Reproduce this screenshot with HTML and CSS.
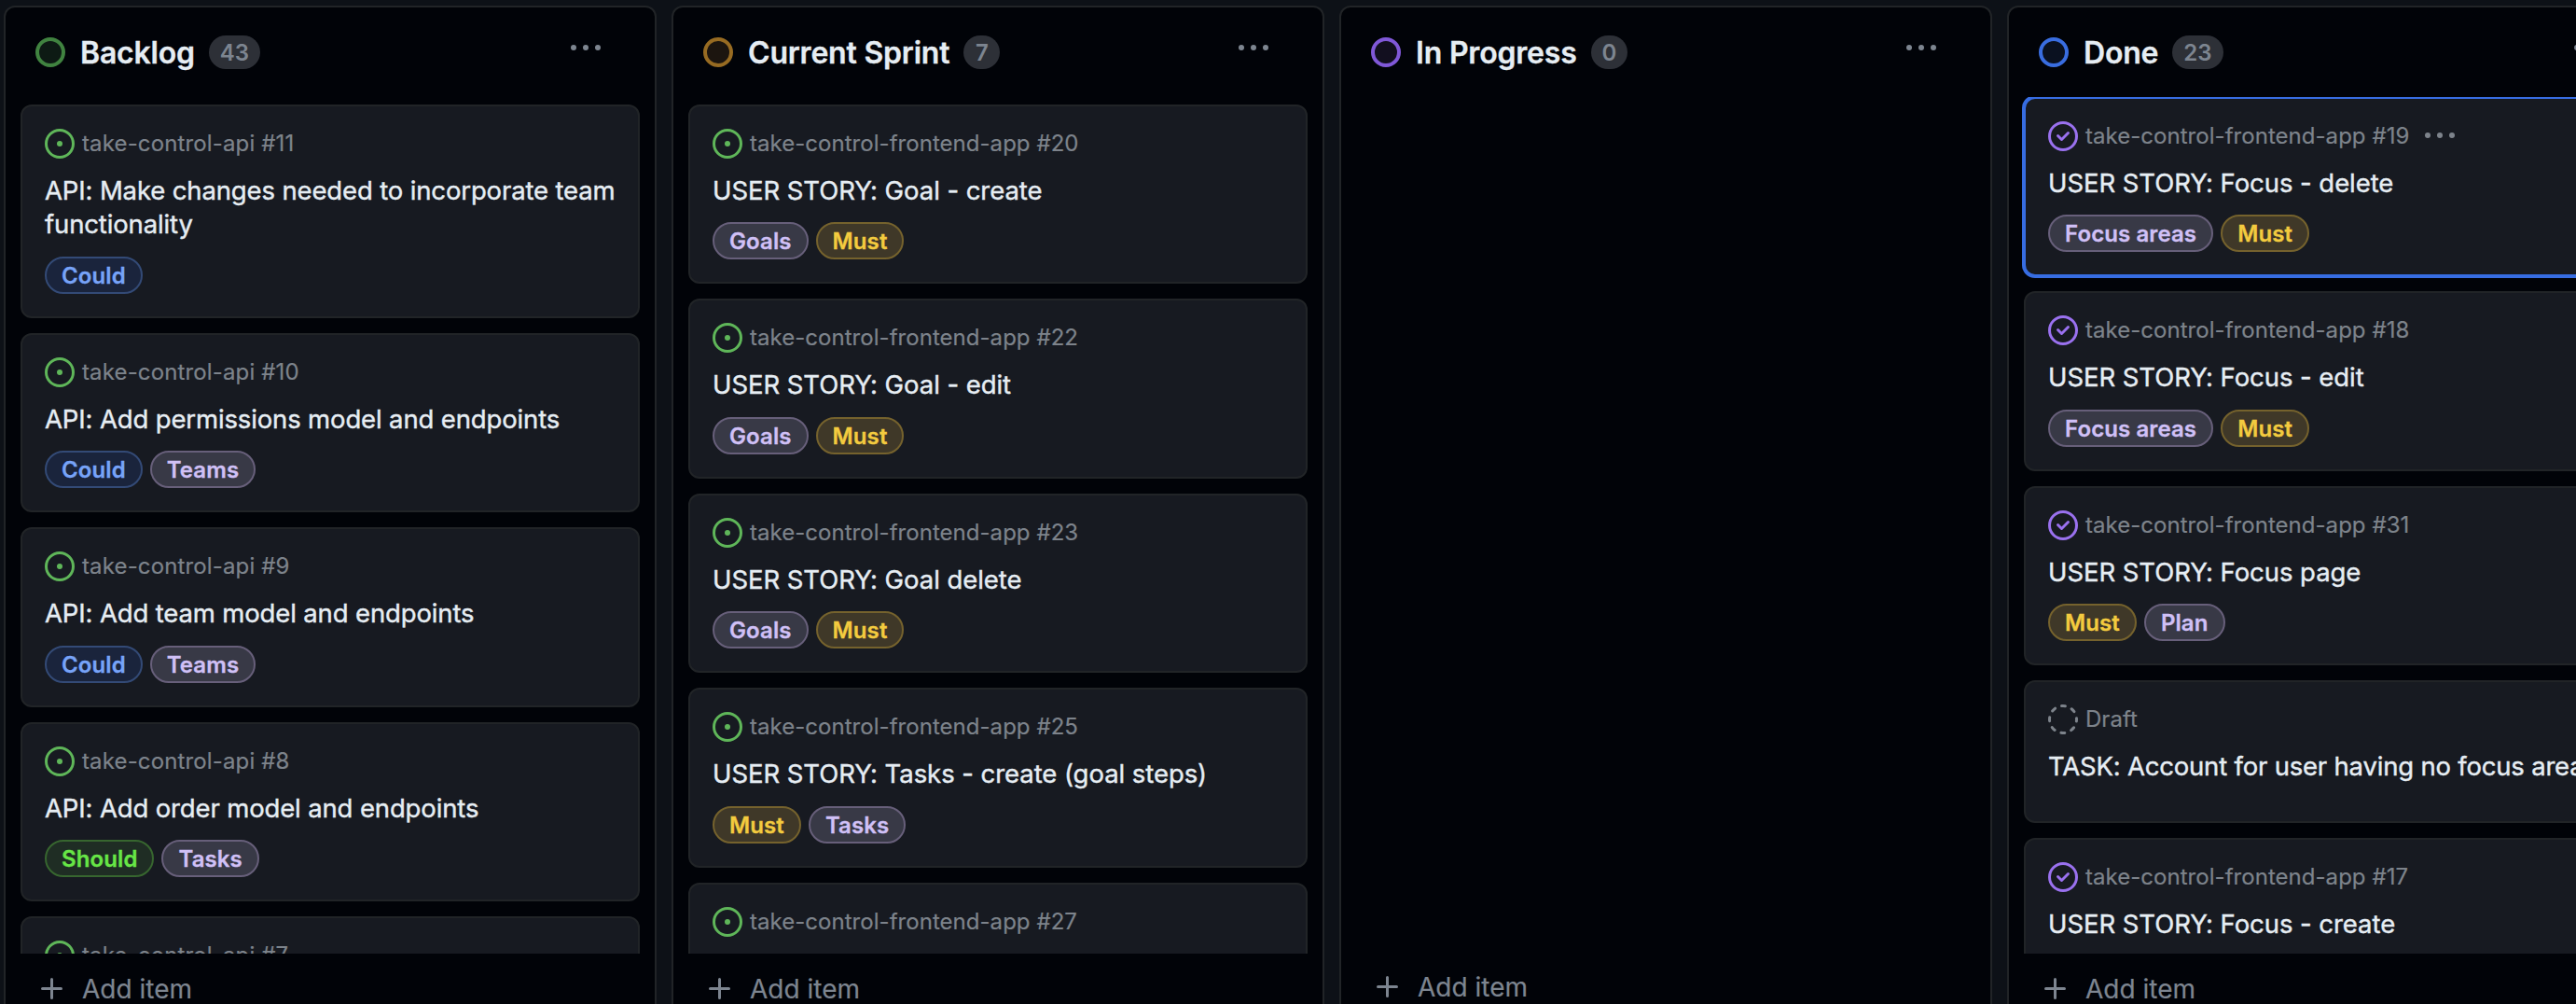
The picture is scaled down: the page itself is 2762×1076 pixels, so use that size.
FILE: index.html
```html
<!DOCTYPE html>
<html lang="en">
<head>
<meta charset="utf-8">
<title>Project board</title>
<link rel="stylesheet" href="styles.css">
</head>
<body>
<svg class="sprite" aria-hidden="true">
  <symbol id="open" viewBox="0 0 16 16"><circle cx="8" cy="8" r="7.25" fill="none" stroke="currentColor" stroke-width="1.5"/><circle cx="8" cy="8" r="1.5" fill="currentColor"/></symbol>
  <symbol id="closed" viewBox="0 0 16 16"><circle cx="8" cy="8" r="7.25" fill="none" stroke="currentColor" stroke-width="1.5"/><path fill="currentColor" d="M11.28 6.78a.75.75 0 0 0-1.06-1.06L7.25 8.69 5.78 7.22a.75.75 0 0 0-1.06 1.06l2 2a.75.75 0 0 0 1.06 0l3.5-3.5Z"/></symbol>
  <symbol id="draft" viewBox="0 0 16 16"><circle cx="8" cy="8" r="7.25" fill="none" stroke="currentColor" stroke-width="1.5" stroke-linecap="round" stroke-dasharray="2 3.694" stroke-dashoffset="1"/></symbol>
  <symbol id="dots" viewBox="0 0 16 16"><g fill="currentColor"><circle cx="1.5" cy="7.5" r="1.5"/><circle cx="8" cy="7.5" r="1.5"/><circle cx="14.5" cy="7.5" r="1.5"/></g></symbol>
  <symbol id="plus" viewBox="0 0 16 16"><path fill="none" stroke="currentColor" stroke-width="1.5" stroke-linecap="round" d="M7.75 2.75v10M2.75 7.75h10"/></symbol>
</svg>
<main class="board">
  <section class="column column-backlog">
    <header class="column-header">
      <span class="status"></span><h2 class="column-title">Backlog</h2><span class="counter">43</span>
      <svg class="icon column-menu"><use href="#dots"/></svg>
    </header>
    <div class="cards">
      <article class="card">
        <div class="meta"><svg class="icon open"><use href="#open"/></svg><span>take-control-api #11</span></div>
        <h3 class="title">API: Make changes needed to incorporate team<br>functionality</h3>
        <div class="labels"><span class="label blue">Could</span></div>
      </article>
      <article class="card">
        <div class="meta"><svg class="icon open"><use href="#open"/></svg><span>take-control-api #10</span></div>
        <h3 class="title">API: Add permissions model and endpoints</h3>
        <div class="labels"><span class="label blue">Could</span><span class="label violet">Teams</span></div>
      </article>
      <article class="card">
        <div class="meta"><svg class="icon open"><use href="#open"/></svg><span>take-control-api #9</span></div>
        <h3 class="title">API: Add team model and endpoints</h3>
        <div class="labels"><span class="label blue">Could</span><span class="label violet">Teams</span></div>
      </article>
      <article class="card">
        <div class="meta"><svg class="icon open"><use href="#open"/></svg><span>take-control-api #8</span></div>
        <h3 class="title">API: Add order model and endpoints</h3>
        <div class="labels"><span class="label green">Should</span><span class="label violet">Tasks</span></div>
      </article>
      <article class="card">
        <div class="meta"><svg class="icon open"><use href="#open"/></svg><span>take-control-api #7</span></div>
        <div class="title"></div>
        <div class="labels"></div>
      </article>
    </div>
    <footer class="add-item"><svg class="icon"><use href="#plus"/></svg><span>Add item</span></footer>
  </section>

  <section class="column column-sprint">
    <header class="column-header">
      <span class="status"></span><h2 class="column-title">Current Sprint</h2><span class="counter">7</span>
      <svg class="icon column-menu"><use href="#dots"/></svg>
    </header>
    <div class="cards">
      <article class="card">
        <div class="meta"><svg class="icon open"><use href="#open"/></svg><span>take-control-frontend-app #20</span></div>
        <h3 class="title">USER STORY: Goal - create</h3>
        <div class="labels"><span class="label violet">Goals</span><span class="label yellow">Must</span></div>
      </article>
      <article class="card">
        <div class="meta"><svg class="icon open"><use href="#open"/></svg><span>take-control-frontend-app #22</span></div>
        <h3 class="title">USER STORY: Goal - edit</h3>
        <div class="labels"><span class="label violet">Goals</span><span class="label yellow">Must</span></div>
      </article>
      <article class="card">
        <div class="meta"><svg class="icon open"><use href="#open"/></svg><span>take-control-frontend-app #23</span></div>
        <h3 class="title">USER STORY: Goal delete</h3>
        <div class="labels"><span class="label violet">Goals</span><span class="label yellow">Must</span></div>
      </article>
      <article class="card">
        <div class="meta"><svg class="icon open"><use href="#open"/></svg><span>take-control-frontend-app #25</span></div>
        <h3 class="title">USER STORY: Tasks - create (goal steps)</h3>
        <div class="labels"><span class="label yellow">Must</span><span class="label violet">Tasks</span></div>
      </article>
      <article class="card">
        <div class="meta"><svg class="icon open"><use href="#open"/></svg><span>take-control-frontend-app #27</span></div>
        <div class="title"></div>
        <div class="labels"></div>
      </article>
    </div>
    <footer class="add-item"><svg class="icon"><use href="#plus"/></svg><span>Add item</span></footer>
  </section>

  <section class="column column-progress">
    <header class="column-header">
      <span class="status"></span><h2 class="column-title">In Progress</h2><span class="counter">0</span>
      <svg class="icon column-menu"><use href="#dots"/></svg>
    </header>
    <div class="cards"></div>
    <footer class="add-item"><svg class="icon"><use href="#plus"/></svg><span>Add item</span></footer>
  </section>

  <section class="column column-done">
    <header class="column-header">
      <span class="status"></span><h2 class="column-title">Done</h2><span class="counter">23</span>
      <svg class="icon column-menu"><use href="#dots"/></svg>
    </header>
    <div class="cards">
      <article class="card selected">
        <div class="meta"><svg class="icon closed"><use href="#closed"/></svg><span>take-control-frontend-app #19</span><svg class="icon card-menu"><use href="#dots"/></svg></div>
        <h3 class="title">USER STORY: Focus - delete</h3>
        <div class="labels"><span class="label violet">Focus areas</span><span class="label yellow">Must</span></div>
      </article>
      <article class="card">
        <div class="meta"><svg class="icon closed"><use href="#closed"/></svg><span>take-control-frontend-app #18</span></div>
        <h3 class="title">USER STORY: Focus - edit</h3>
        <div class="labels"><span class="label violet">Focus areas</span><span class="label yellow">Must</span></div>
      </article>
      <article class="card">
        <div class="meta"><svg class="icon closed"><use href="#closed"/></svg><span>take-control-frontend-app #31</span></div>
        <h3 class="title">USER STORY: Focus page</h3>
        <div class="labels"><span class="label yellow">Must</span><span class="label violet">Plan</span></div>
      </article>
      <article class="card">
        <div class="meta"><svg class="icon"><use href="#draft"/></svg><span>Draft</span></div>
        <h3 class="title title-long">TASK: Account for user having no focus areas</h3>
      </article>
      <article class="card">
        <div class="meta"><svg class="icon closed"><use href="#closed"/></svg><span>take-control-frontend-app #17</span></div>
        <h3 class="title">USER STORY: Focus - create</h3>
        <div class="labels"></div>
      </article>
    </div>
    <footer class="add-item"><svg class="icon"><use href="#plus"/></svg><span>Add item</span></footer>
  </section>
</main>
</body>
</html>
```
FILE: styles.css
```css
* { box-sizing: border-box; }

body {
  margin: 0;
  height: 1076px;
  overflow: hidden;
  background: #0d1117;
  color: #e6edf3;
  font-family: Inter, "Liberation Sans", sans-serif;
}

.sprite { display: none; }

.icon {
  display: block;
  flex: none;
  width: 32px;
  height: 32px;
}

.board {
  display: flex;
  gap: 16px;
  height: 1076px;
  padding: 6px 0 0 4px;
  overflow: hidden;
}

.column {
  display: flex;
  flex: none;
  flex-direction: column;
  width: 700px;
  height: 1100px;
  background: #010308;
  border: 2px solid #212427;
  border-radius: 12px;
}

.column-header {
  display: flex;
  flex: none;
  align-items: center;
  height: 96px;
  padding: 0 58px 0 32px;
  color: #7d8590;
}

.status {
  flex: none;
  width: 32px;
  height: 32px;
  margin-right: 16px;
  border: 4px solid;
  border-radius: 50%;
}

.column-backlog .status { color: #408340; background: #0d1a14; }
.column-sprint .status { color: #976b22; background: #1c150f; }
.column-progress .status { color: #8058d8; background: #120f1f; }
.column-done .status { color: #396de0; background: #0a1120; }

.column-title {
  margin: 0;
  padding-top: 2px;
  color: #e6edf3;
  font-size: 32px;
  font-weight: 600;
  line-height: 48px;
  letter-spacing: -0.2px;
  -webkit-text-stroke: 0.3px currentColor;
}

.counter {
  min-width: 39px;
  height: 36px;
  margin-left: 15px;
  padding: 0 12px;
  border-radius: 18px;
  background: #2d3037;
  font-size: 24px;
  font-weight: 600;
  line-height: 37px;
  text-align: center;
}

.column-menu {
  align-self: flex-start;
  margin: 28px 0 0 auto;
}

.cards {
  display: flex;
  flex: none;
  flex-direction: column;
  gap: 16px;
  height: 918px;
  padding: 8px 14px 0 16px;
  overflow: hidden;
}

.column-done .cards { padding-top: 0; }

.card {
  flex: none;
  width: 664px;
  padding: 24px;
  background: #171a21;
  border: 2px solid #212427;
  border-radius: 12px;
}

.card.selected {
  border-color: #376de2;
  box-shadow: 0 0 0 2px #376de2;
}

.meta {
  display: flex;
  align-items: center;
  gap: 8px;
  height: 32px;
  color: #7d838b;
  font-size: 24px;
  line-height: 32px;
  letter-spacing: 0.04px;
  -webkit-text-stroke: 0.2px currentColor;
}

.column-backlog .meta { letter-spacing: 0.14px; }
.open { color: #5fb659; }
.closed { color: #9a71ef; }
.card-menu { margin-left: 9px; }

.title {
  min-height: 36.4px;
  margin: 16px 0;
  font-size: 27.5px;
  font-weight: 400;
  line-height: 36.4px;
  letter-spacing: -0.06px;
  white-space: nowrap;
  -webkit-text-stroke: 0.4px currentColor;
}

.column-backlog .title { letter-spacing: -0.14px; }
.title-long { letter-spacing: -0.2px; }

.labels {
  display: flex;
  gap: 8px;
  height: 40px;
}

.label {
  padding: 0 16px;
  border: 2px solid;
  border-radius: 20px;
  font-size: 24px;
  font-weight: 600;
  line-height: 37px;
  letter-spacing: 0.1px;
  -webkit-text-stroke: 0.3px currentColor;
}

.blue { color: #77a3f8; background: #1a243c; border-color: #334a76; }
.violet { color: #d0c0f6; background: #383946; border-color: #675f7a; }
.green { color: #67e646; background: #1f2d24; border-color: #37662f; }
.yellow { color: #f3cb3f; background: #3f3828; border-color: #75622d; }

.add-item {
  display: flex;
  flex: none;
  align-items: center;
  gap: 16px;
  height: 32px;
  margin: 22px 0 0 34px;
  color: #7d8590;
  font-size: 28px;
  line-height: 32px;
  -webkit-text-stroke: 0.2px currentColor;
}

.column-progress .add-item { margin-top: 20px; }
```
